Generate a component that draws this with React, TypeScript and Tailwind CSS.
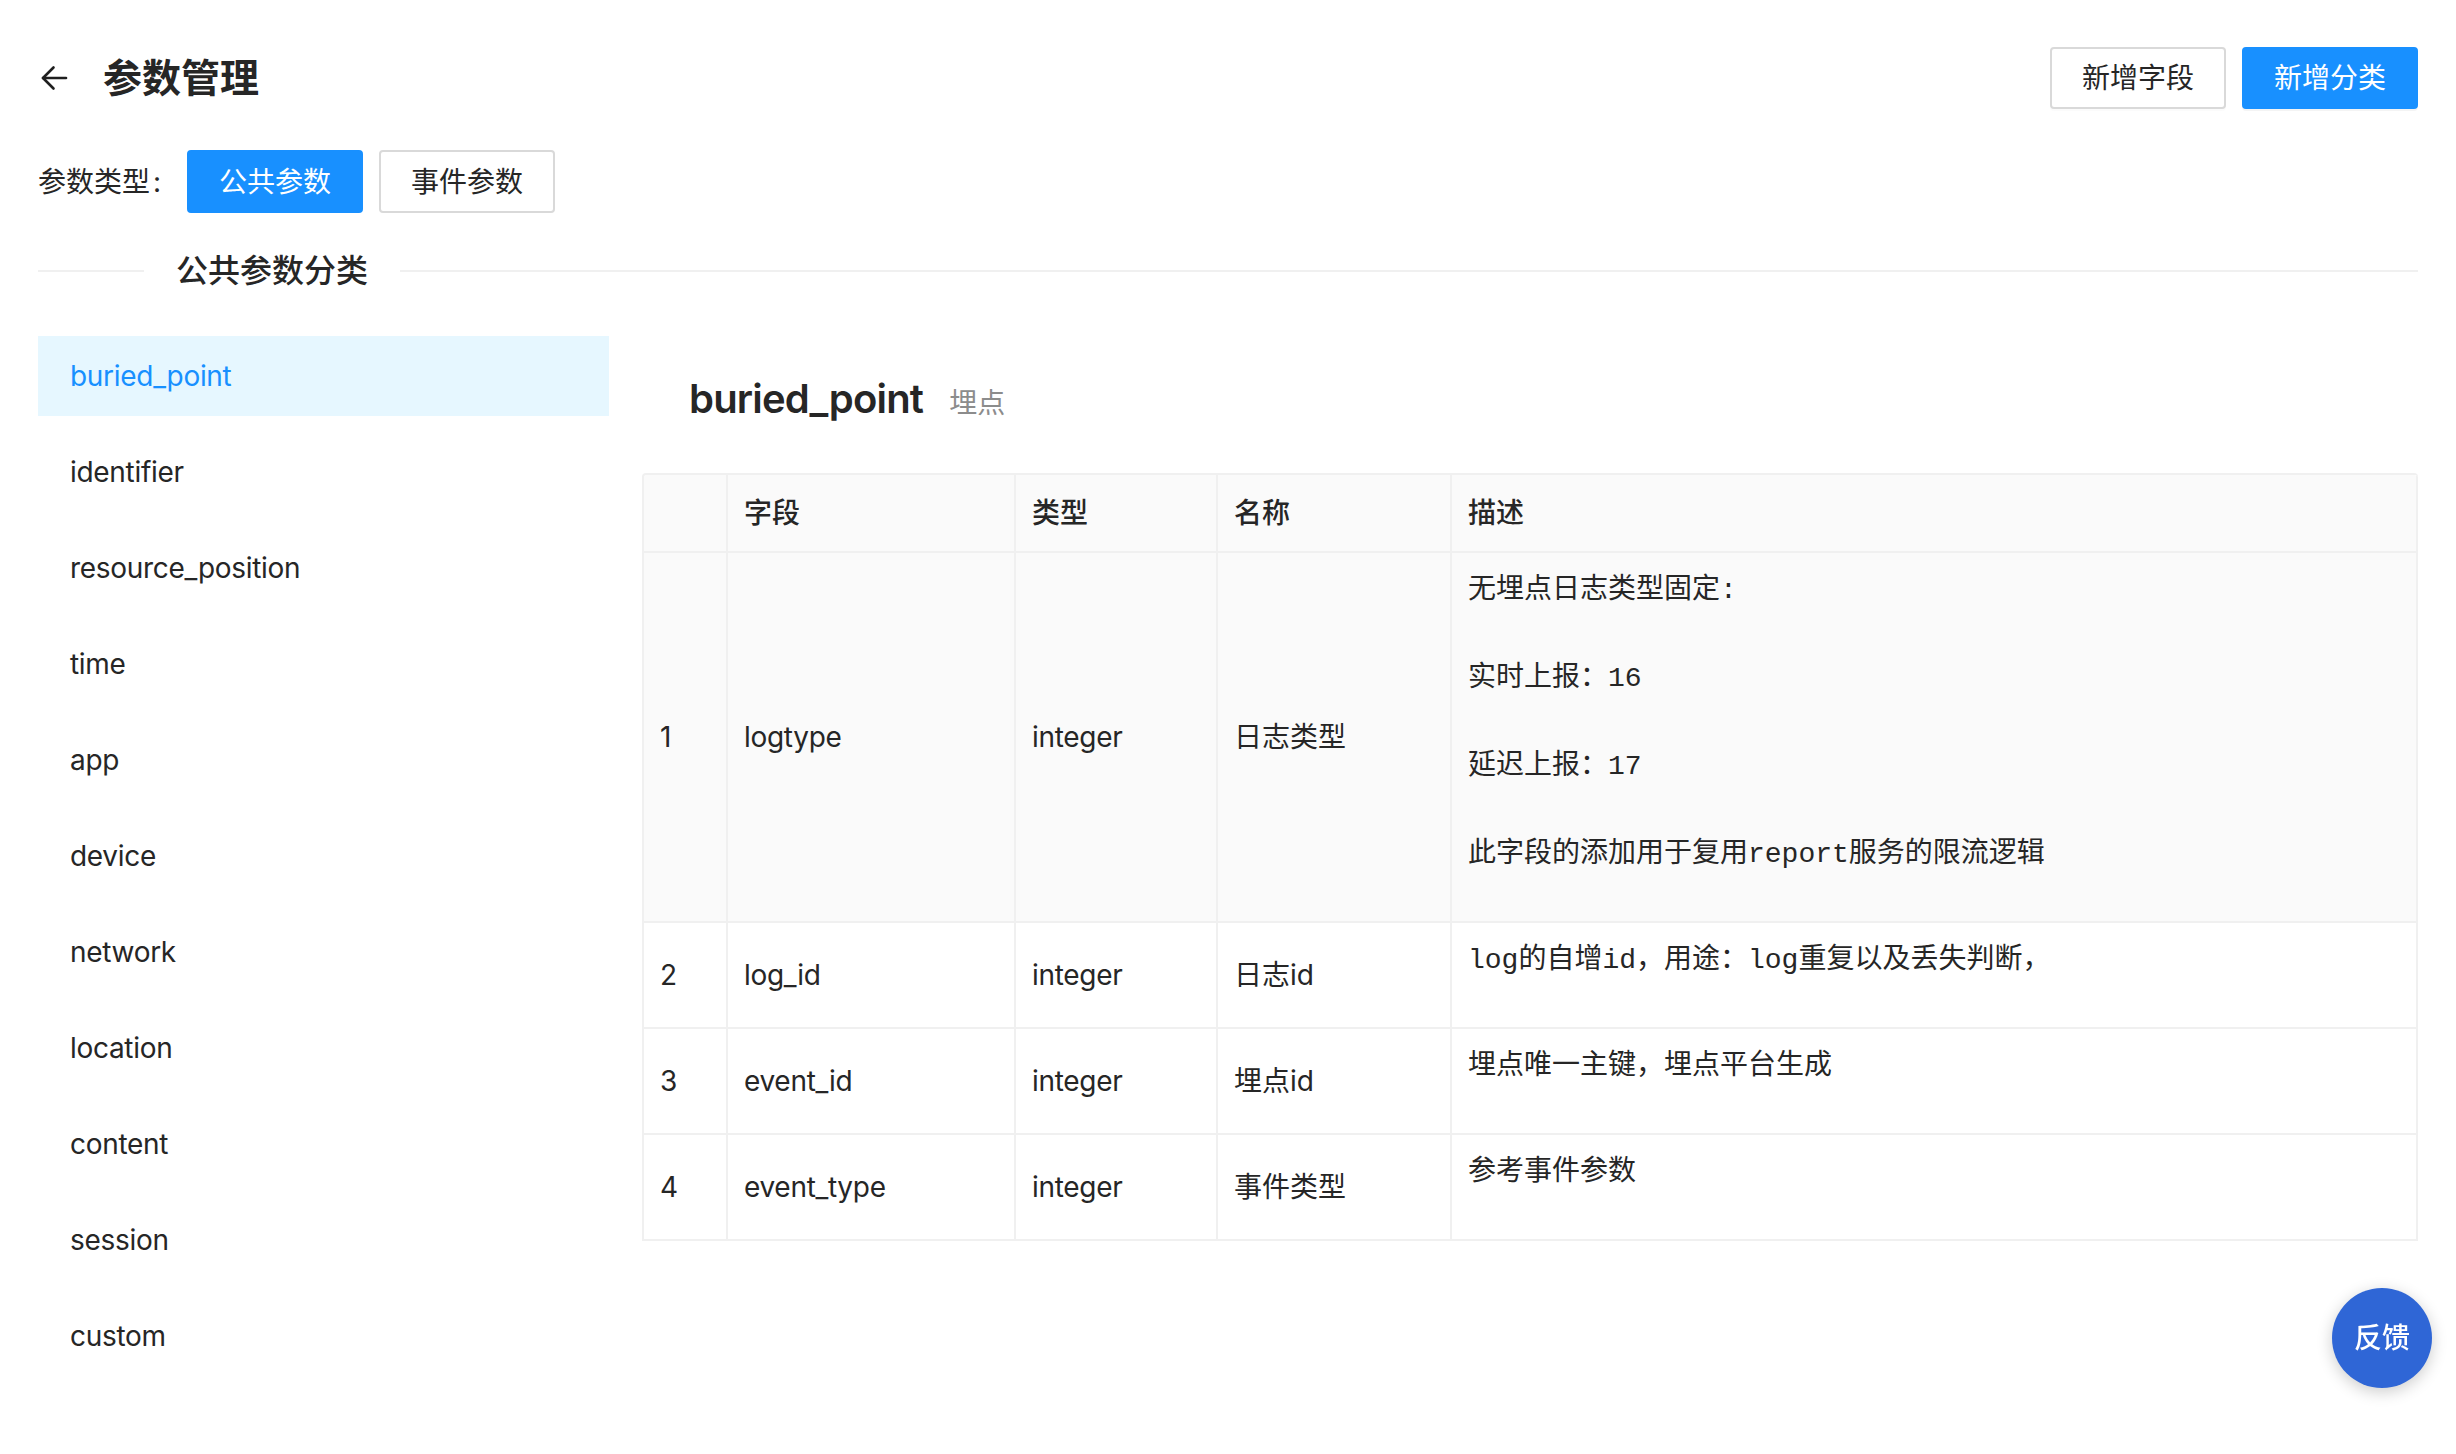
import React from "react";

const categories = [
  "buried_point",
  "identifier",
  "resource_position",
  "time",
  "app",
  "device",
  "network",
  "location",
  "content",
  "session",
  "custom",
];

const rows = [
  {
    no: 1,
    field: "logtype",
    type: "integer",
    name: "日志类型",
    desc: "无埋点日志类型固定:\n\n实时上报：16\n\n延迟上报：17\n\n此字段的添加用于复用report服务的限流逻辑",
  },
  { no: 2, field: "log_id", type: "integer", name: "日志id", desc: "log的自增id，用途：log重复以及丢失判断，" },
  { no: 3, field: "event_id", type: "integer", name: "埋点id", desc: "埋点唯一主键，埋点平台生成" },
  { no: 4, field: "event_type", type: "integer", name: "事件类型", desc: "参考事件参数" },
];

function BackArrow() {
  return (
    <svg width="28" height="28" viewBox="0 0 28 28" fill="none" stroke="#1f1f1f" strokeWidth="2.6" strokeLinecap="round" strokeLinejoin="round">
      <path d="M26 14H3" />
      <path d="M13.5 3.5L3 14l10.5 10.5" />
    </svg>
  );
}

export default function App() {
  return (
    <div className="min-h-screen bg-white text-[#262626] pl-[38px] pr-[38px] pt-[47px] font-[Inter,'Noto_Sans_CJK_SC',sans-serif]">
      {/* header */}
      <div className="flex h-[62px] items-center justify-between">
        <div className="flex items-center">
          <div className="ml-[2px]">
            <BackArrow />
          </div>
          <h1 className="ml-[35px] text-[39px] font-bold leading-[56px]">参数管理</h1>
        </div>
        <div className="flex items-center gap-[16px]">
          <button className="h-[62px] w-[176px] rounded-[4px] border-2 border-[#d9d9d9] bg-white text-[28px] text-[#262626] shadow-[0_2px_0_rgba(0,0,0,0.015)]">
            新增字段
          </button>
          <button className="h-[62px] w-[176px] rounded-[4px] border-2 border-[#1890ff] bg-[#1890ff] text-[28px] text-white shadow-[0_2px_0_rgba(0,0,0,0.045)]">
            新增分类
          </button>
        </div>
      </div>

      {/* param type */}
      <div className="mt-[41px] flex h-[63px] items-center">
        <span className="text-[28px] leading-[44px]">参数类型</span>
        <span className="ml-[3px] mr-[26px] text-[28px] leading-[44px]">:</span>
        <button className="h-[63px] w-[176px] rounded-[4px] border-2 border-[#1890ff] bg-[#1890ff] text-[28px] text-white">
          公共参数
        </button>
        <button className="ml-4 h-[63px] w-[176px] rounded-[4px] border-2 border-[#d9d9d9] bg-white text-[28px] text-[#262626]">
          事件参数
        </button>
      </div>

      {/* divider */}
      <div className="mt-[36px] flex h-[44px] items-center">
        <div className="h-[2px] w-[106px] bg-[#f0f0f0]" />
        <span className="px-[32px] text-[32px] font-medium leading-[44px]">公共参数分类</span>
        <div className="h-[2px] flex-1 bg-[#f0f0f0]" />
      </div>

      {/* main */}
      <div className="mt-[43px] flex pb-10">
        <ul className="flex w-[571px] shrink-0 flex-col gap-4">
          {categories.map((c, i) => (
            <li
              key={c}
              className={
                i === 0
                  ? "flex h-[80px] items-center bg-[#e6f7ff] pl-8 text-[28px] tracking-[-0.3px] text-[#1890ff]"
                  : "flex h-[80px] items-center pl-8 text-[28px] tracking-[-0.3px] text-[#262626]"
              }
            >
              {c}
            </li>
          ))}
        </ul>

        <div className="ml-[33px] flex-1">
          <div className="flex items-baseline pl-[47px] pt-[35px]">
            <span className="text-[40px] font-semibold leading-[56px] tracking-[-0.8px]">buried_point</span>
            <span className="ml-[26px] text-[28px] text-[#8c8c8c]">埋点</span>
          </div>

          <div className="mt-[46px] overflow-hidden rounded-t-[4px] border-l-2 border-t-2 border-[#f0f0f0]">
            <table className="w-full table-fixed border-collapse text-[28px] leading-[44px]">
              <colgroup>
                <col className="w-[83px]" />
                <col className="w-[288px]" />
                <col className="w-[202px]" />
                <col className="w-[234px]" />
                <col />
              </colgroup>
              <thead>
                <tr className="bg-[#fafafa]">
                  <th className="border-b-2 border-r-2 border-[#f0f0f0] p-4 text-left font-medium"></th>
                  <th className="border-b-2 border-r-2 border-[#f0f0f0] p-4 text-left font-medium">字段</th>
                  <th className="border-b-2 border-r-2 border-[#f0f0f0] p-4 text-left font-medium">类型</th>
                  <th className="border-b-2 border-r-2 border-[#f0f0f0] p-4 text-left font-medium">名称</th>
                  <th className="border-b-2 border-r-2 border-[#f0f0f0] p-4 text-left font-medium">描述</th>
                </tr>
              </thead>
              <tbody>
                {rows.map((r) => (
                  <tr key={r.no} className={r.no === 1 ? "bg-[#fafafa]" : "bg-white"}>
                    <td className="border-b-2 border-r-2 border-[#f0f0f0] p-4 align-middle">{r.no}</td>
                    <td className="border-b-2 border-r-2 border-[#f0f0f0] p-4 align-middle tracking-[-0.3px]">{r.field}</td>
                    <td className="border-b-2 border-r-2 border-[#f0f0f0] p-4 align-middle tracking-[-0.3px]">{r.type}</td>
                    <td className="border-b-2 border-r-2 border-[#f0f0f0] p-4 align-middle">{r.name}</td>
                    <td className="border-b-2 border-r-2 border-[#f0f0f0] p-4 align-top">
                      <pre className="m-0 mb-[28px] whitespace-pre-wrap font-['Liberation_Mono','Noto_Sans_CJK_SC',monospace] text-[28px] leading-[44px] text-[#262626]">
                        {r.desc}
                      </pre>
                    </td>
                  </tr>
                ))}
              </tbody>
            </table>
          </div>
        </div>
      </div>

      {/* feedback */}
      <button className="fixed bottom-[66px] right-[24px] flex h-[100px] w-[100px] items-center justify-center rounded-full bg-[#2f66d6] text-[28px] font-medium text-white shadow-[0_4px_16px_rgba(0,0,0,0.2)]">
        反馈
      </button>
    </div>
  );
}
